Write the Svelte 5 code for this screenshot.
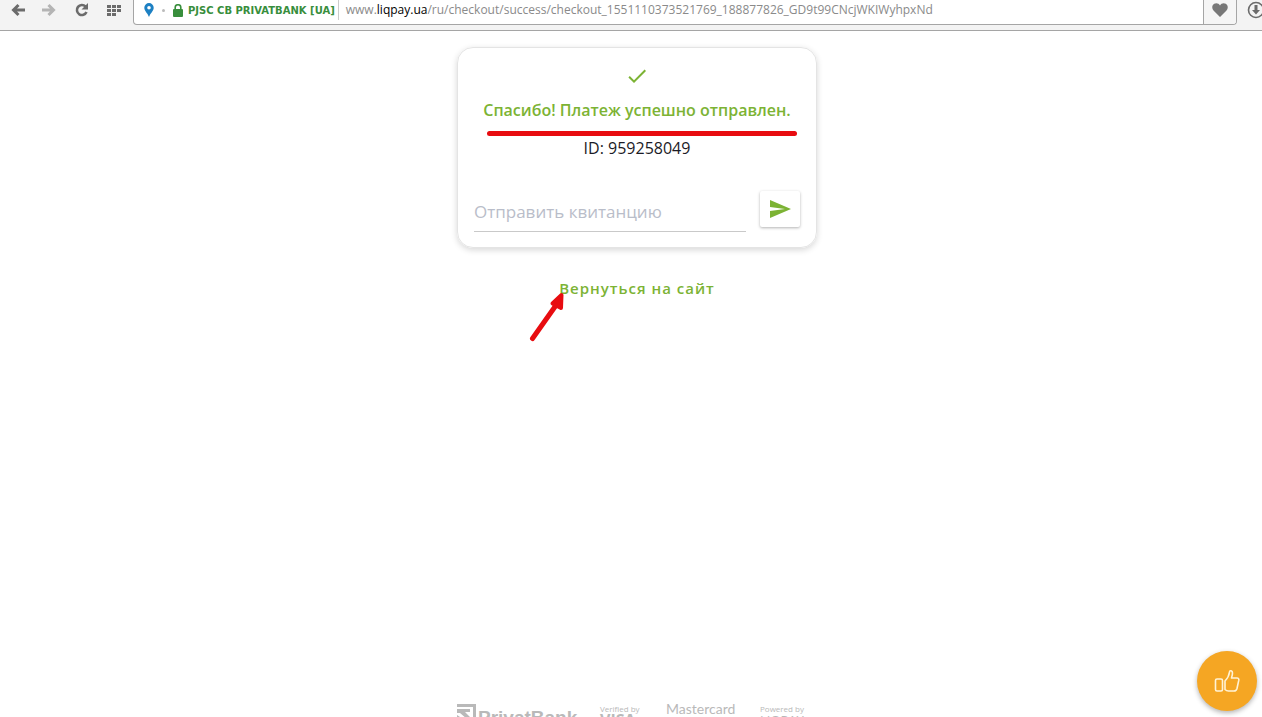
<script lang="ts">
    const bank = "PJSC CB PRIVATBANK [UA]";
    const url = {
        prefix: "www.",
        domain: "liqpay.ua",
        path: "/ru/checkout/success/checkout_1551110373521769_188877826_GD9t99CNcjWKIWyhpxNd"
    };
    const payment = { id: "959258049" };

    let receipt = "";

    function sendReceipt(event: any) {
        event.preventDefault();
        console.log(receipt);
    }
</script>

<div class="page">
    <header class="toolbar">
        <button class="tool" aria-label="Back">
            <svg width="16" height="14" viewBox="0 0 16 14"><path d="M15 7H4M8.500 2L3.500 7l5 5" fill="none" stroke="#6b6b6b" stroke-width="3" /></svg>
        </button>
        <button class="tool" aria-label="Forward">
            <svg width="16" height="14" viewBox="0 0 16 14"><path d="M0 7h11M6.500 2l5 5-5 5" fill="none" stroke="#b4b4b4" stroke-width="3" /></svg>
        </button>
        <button class="tool" aria-label="Reload">
            <svg width="16" height="14" viewBox="0 0 16 14"><path d="M11.500 3.500A5 5 0 1 0 12.500 9" fill="none" stroke="#6b6b6b" stroke-width="2.600" /><path d="M14 0v6.500H7.500z" fill="#6b6b6b" /></svg>
        </button>
        <button class="tool" aria-label="Speed dial">
            <svg width="16" height="14" viewBox="0 0 16 14" fill="#6b6b6b">
                <path d="M1 2h4v3H1zM6 2h4v3H6zM11 2h4v3h-4zM1 6h4v3H1zM6 6h4v3H6zM11 6h4v3h-4zM1 10h4v3H1zM6 10h4v3H6z" />
            </svg>
        </button>
        <div class="address">
            <svg class="pin" width="10" height="14" viewBox="0 0 10 14"><path d="M5 0a4.700 4.700 0 0 0-4.700 4.700C.3 8 3.700 10 5 14c1.300-4 4.700-6 4.700-9.300A4.700 4.700 0 0 0 5 0zm0 3a1.800 1.800 0 1 1 0 3.600A1.800 1.800 0 0 1 5 3z" fill="#1d80c3" fill-rule="evenodd" /></svg>
            <span class="dot"></span>
            <svg class="lock" width="10" height="13" viewBox="0 0 10 13"><path d="M2.200 6V3.500a2.800 2.800 0 0 1 5.600 0V6" fill="none" stroke="#388e3c" stroke-width="1.600" /><rect y="5" width="10" height="8" rx="1" fill="#388e3c" /></svg>
            <span class="bank">{bank}</span>
            <span class="url">{url.prefix}<b>{url.domain}</b>{url.path}</span>
            <button class="heart" aria-label="Bookmark">
                <svg width="16" height="14" viewBox="0 0 16 14"><path d="M8 14L1.500 7.500C-.5 5.300 0 2 2.200.8 4.300-.3 6.800.3 8 2.500 9.200.3 11.700-.3 13.800.8 16 2 16.500 5.300 14.500 7.500z" fill="#777" /></svg>
            </button>
        </div>
        <button class="download" aria-label="Downloads">
            <svg width="18" height="18" viewBox="0 0 18 18"><circle cx="9" cy="9" r="7.500" fill="none" stroke="#6b6b6b" stroke-width="1.600" /><path d="M7.500 4h3v5H13l-4 4.500L5 9h2.500z" fill="#6b6b6b" /></svg>
        </button>
    </header>

    <main>
        <div class="checkout">
            <section class="card">
                <svg class="check" width="24" height="24" viewBox="0 0 24 24"><path d="M9 16.200L4.800 12l-1.400 1.400L9 19 21 7l-1.400-1.400z" fill="#7cb334" /></svg>
                <h1>Спасибо! Платеж успешно отправлен.</h1>
                <p>ID: {payment.id}</p>
                <form on:submit={sendReceipt}>
                    <input type="text" aria-label="Отправить квитанцию" placeholder="Отправить квитанцию" bind:value={receipt} />
                    <button type="submit" aria-label="Отправить">
                        <svg width="24" height="24" viewBox="0 0 24 24"><path d="M2 21l21-9L2 3v7l15 2-15 2z" fill="#7cb334" /></svg>
                    </button>
                </form>
            </section>
            <a class="back" href="/">Вернуться на сайт</a>

            <!-- hand-drawn marks over the card and the link -->
            <svg class="marks" width="360" height="300" viewBox="0 0 360 300" fill="none" stroke="#e80c10" stroke-linecap="round" stroke-linejoin="round" stroke-width="5">
                <path d="M32.500 86.500H337.500" />
                <path d="M75.500 291.500L102 254" />
                <path d="M95.500 256.500l9-8.500-.5 13z" fill="#e80c10" stroke-width="4" />
            </svg>
        </div>
    </main>

    <footer>
        <div class="partners">
            <span class="privat">
                <svg width="19" height="19" viewBox="0 0 19 19" fill="#b9b9b9"><path d="M0 0h19v19h-3V3H0z" /><path d="M0 5h13v3H8l5 5v6h-3v-4L3 9H0z" /><path d="M0 11l6 4v4H0z" /></svg>
                <b>PrivatBank</b>
            </span>
            <span class="mark visa"><small>Verified by</small><b>VISA</b></span>
            <span class="mark mastercard">Mastercard</span>
            <span class="mark liqpay"><small>Powered by</small><span>LIQPAY »</span></span>
        </div>
    </footer>

    <button class="like" aria-label="Like">
        <svg width="26" height="24" viewBox="0 0 26 24" fill="none" stroke="#fff3d6" stroke-width="1.600" stroke-linejoin="round">
            <rect x="1.500" y="10" width="7" height="12" rx="1.500" />
            <path d="M11 12c3-3 4-5 4.500-9 .2-2 3-1.500 3 1 0 2-.5 3.500-1 5H23c1.500 0 2 1 1.800 2.200L23 19.500c-.4 1.600-1.200 2.500-3 2.500h-5.500c-1.500 0-2.500-.5-3.500-1.500z" />
        </svg>
    </button>
</div>

<style>
:global(body) {
    margin: 0;
    background: #fff;
}
.page {
    display: flex;
    flex-direction: column;
    height: 100vh;
    overflow: hidden;
    font-family: "Open Sans", "Noto Sans", sans-serif;
}
button {
    padding: 0;
    border: none;
    background: none;
    cursor: pointer;
}
svg {
    display: block;
    flex: none;
}

.toolbar {
    display: flex;
    box-sizing: border-box;
    height: 31px;
    padding-left: 2px;
    background: #f3f3f3;
    border-bottom: 1px solid #a5a5a5;
}
.tool {
    display: flex;
    justify-content: center;
    align-items: center;
    width: 32px;
    height: 20px;
}
.address {
    display: flex;
    flex: 1;
    align-items: center;
    box-sizing: border-box;
    min-width: 0;
    height: 25px;
    margin-left: 3px;
    padding: 0 0 4px 10px;
    background: #fff;
    border: 1px solid #a5a5a5;
    border-top: none;
    border-radius: 0 0 4px 4px;
}
.dot {
    width: 3px;
    height: 3px;
    margin: 0 8px;
    border-radius: 50%;
    background: #bbb;
}
.bank {
    margin-left: 5px;
    color: #388e3c;
    font-family: "DejaVu Sans", sans-serif;
    font-size: 10px;
    font-weight: bold;
    white-space: nowrap;
}
.url {
    flex: 1;
    min-width: 0;
    margin-left: 3px;
    padding-left: 7px;
    border-left: 1px solid #ccc;
    overflow: hidden;
    color: #8a8a8a;
    font-size: 12px;
    line-height: 20px;
    white-space: nowrap;
}
.url b {
    color: #000;
    font-weight: normal;
}
.heart {
    display: flex;
    justify-content: center;
    align-items: center;
    width: 33px;
    height: 24px;
    margin-bottom: -4px;
    padding-bottom: 4px;
    background: #f5f5f5;
    border-left: 1px solid #a5a5a5;
    border-radius: 0 0 3px 0;
}
.download {
    width: 25px;
    height: 20px;
    padding-left: 10px;
    overflow: hidden;
}

main {
    flex: 1;
    padding: 16px 0 0 12px;
}
.checkout {
    position: relative;
    display: flex;
    flex-direction: column;
    align-items: center;
    width: 360px;
    margin: 0 auto;
}
.card {
    display: flex;
    flex-direction: column;
    align-items: center;
    box-sizing: border-box;
    width: 100%;
    padding: 16px 16px 15px;
    border: 1px solid #e4e4e4;
    border-radius: 16px;
    box-shadow: 0 2px 6px rgba(0, 0, 0, 0.16);
}
h1 {
    margin: 10px 0 0;
    color: #7cb334;
    font-size: 16px;
    font-weight: 600;
    line-height: 24px;
    white-space: nowrap;
}
p {
    margin: 14px 0 0;
    color: #1b1b26;
    font-size: 16px;
    font-weight: 500;
    line-height: 24px;
}
form {
    display: flex;
    align-items: flex-end;
    gap: 14px;
    width: 100%;
    margin-top: 31px;
}
input {
    flex: 1;
    min-width: 0;
    height: 40px;
    padding: 0;
    border: none;
    border-bottom: 1px solid #c9c9c9;
    outline: none;
    background: none;
    color: #1b1b26;
    font-family: inherit;
    font-size: 17px;
}
input::placeholder {
    color: #b9bdc9;
    opacity: 1;
}
form button {
    display: flex;
    justify-content: center;
    align-items: center;
    width: 40px;
    height: 36px;
    margin-bottom: 5px;
    border-radius: 2px;
    box-shadow: 0 1px 3px rgba(0, 0, 0, 0.3);
}
.back {
    margin-top: 28px;
    color: #7cb334;
    font-size: 15px;
    font-weight: 600;
    letter-spacing: 1px;
    line-height: 24px;
    text-decoration: none;
}
.marks {
    position: absolute;
    top: 0;
    left: 0;
    pointer-events: none;
}

footer {
    height: 13px;
    padding-left: 12px;
    color: #b9b9b9;
}
.partners {
    display: flex;
    width: 360px;
    margin: 0 auto;
    line-height: 12px;
}
.privat {
    display: flex;
    gap: 2px;
    width: 143px;
    font-family: "Liberation Sans", sans-serif;
    font-size: 19px;
    line-height: 28px;
}
.mark {
    display: flex;
    flex-direction: column;
    white-space: nowrap;
}
.visa {
    width: 66px;
}
.mastercard {
    width: 94px;
    font-family: Lato, sans-serif;
    font-size: 14px;
    line-height: 10px;
}
.liqpay {
    font-size: 13px;
}
small {
    font-size: 8px;
    line-height: 10px;
}

.like {
    position: fixed;
    right: 5px;
    bottom: 6px;
    display: flex;
    justify-content: center;
    align-items: center;
    width: 60px;
    height: 60px;
    border-radius: 50%;
    background: #f5a623;
    box-shadow: 0 2px 5px rgba(0, 0, 0, 0.3);
}
</style>
